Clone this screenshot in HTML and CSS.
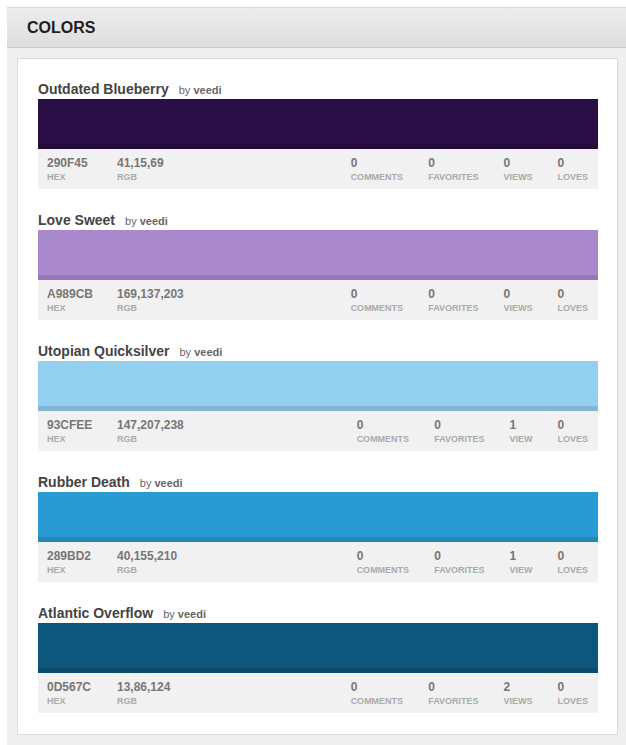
FILE: index.html
```html
<!DOCTYPE html>
<html>
<head>
<meta charset="utf-8">
<link rel="stylesheet" href="styles.css">
</head>
<body>
<div class="wrap">
  <div class="header"><h1>COLORS</h1></div>
  <div class="panel">
    <div class="item">
      <div class="title"><span class="name">Outdated Blueberry</span><span class="by">by <b>veedi</b></span></div>
      <div class="swatch" style="background:#290F45"></div>
      <div class="info">
        <div class="stat hex"><span class="val">290F45</span><span class="lbl">HEX</span></div>
        <div class="stat rgb"><span class="val">41,15,69</span><span class="lbl">RGB</span></div>
        <div class="stats">
          <div class="stat"><span class="val">0</span><span class="lbl">COMMENTS</span></div>
          <div class="stat"><span class="val">0</span><span class="lbl">FAVORITES</span></div>
          <div class="stat"><span class="val">0</span><span class="lbl">VIEWS</span></div>
          <div class="stat"><span class="val">0</span><span class="lbl">LOVES</span></div>
        </div>
      </div>
    </div>
    <div class="item">
      <div class="title"><span class="name">Love Sweet</span><span class="by">by <b>veedi</b></span></div>
      <div class="swatch" style="background:#A989CB"></div>
      <div class="info">
        <div class="stat hex"><span class="val">A989CB</span><span class="lbl">HEX</span></div>
        <div class="stat rgb"><span class="val">169,137,203</span><span class="lbl">RGB</span></div>
        <div class="stats">
          <div class="stat"><span class="val">0</span><span class="lbl">COMMENTS</span></div>
          <div class="stat"><span class="val">0</span><span class="lbl">FAVORITES</span></div>
          <div class="stat"><span class="val">0</span><span class="lbl">VIEWS</span></div>
          <div class="stat"><span class="val">0</span><span class="lbl">LOVES</span></div>
        </div>
      </div>
    </div>
    <div class="item">
      <div class="title"><span class="name">Utopian Quicksilver</span><span class="by">by <b>veedi</b></span></div>
      <div class="swatch" style="background:#93CFEE"></div>
      <div class="info">
        <div class="stat hex"><span class="val">93CFEE</span><span class="lbl">HEX</span></div>
        <div class="stat rgb"><span class="val">147,207,238</span><span class="lbl">RGB</span></div>
        <div class="stats">
          <div class="stat"><span class="val">0</span><span class="lbl">COMMENTS</span></div>
          <div class="stat"><span class="val">0</span><span class="lbl">FAVORITES</span></div>
          <div class="stat"><span class="val">1</span><span class="lbl">VIEW</span></div>
          <div class="stat"><span class="val">0</span><span class="lbl">LOVES</span></div>
        </div>
      </div>
    </div>
    <div class="item">
      <div class="title"><span class="name">Rubber Death</span><span class="by">by <b>veedi</b></span></div>
      <div class="swatch" style="background:#289BD2"></div>
      <div class="info">
        <div class="stat hex"><span class="val">289BD2</span><span class="lbl">HEX</span></div>
        <div class="stat rgb"><span class="val">40,155,210</span><span class="lbl">RGB</span></div>
        <div class="stats">
          <div class="stat"><span class="val">0</span><span class="lbl">COMMENTS</span></div>
          <div class="stat"><span class="val">0</span><span class="lbl">FAVORITES</span></div>
          <div class="stat"><span class="val">1</span><span class="lbl">VIEW</span></div>
          <div class="stat"><span class="val">0</span><span class="lbl">LOVES</span></div>
        </div>
      </div>
    </div>
    <div class="item">
      <div class="title"><span class="name">Atlantic Overflow</span><span class="by">by <b>veedi</b></span></div>
      <div class="swatch" style="background:#0D567C"></div>
      <div class="info">
        <div class="stat hex"><span class="val">0D567C</span><span class="lbl">HEX</span></div>
        <div class="stat rgb"><span class="val">13,86,124</span><span class="lbl">RGB</span></div>
        <div class="stats">
          <div class="stat"><span class="val">0</span><span class="lbl">COMMENTS</span></div>
          <div class="stat"><span class="val">0</span><span class="lbl">FAVORITES</span></div>
          <div class="stat"><span class="val">2</span><span class="lbl">VIEWS</span></div>
          <div class="stat"><span class="val">0</span><span class="lbl">LOVES</span></div>
        </div>
      </div>
    </div>
  </div>
</div>
</body>
</html>
```
FILE: styles.css
```css
html, body {
  margin: 0;
  padding: 0;
  background: #fff;
}
body {
  padding: 7px 0 0 7px;
  font-family: "Liberation Sans", Arial, sans-serif;
}
.wrap {
  background: #efefef;
  padding-bottom: 12px;
}
.header {
  height: 39px;
  border-top: 1px solid #dadada;
  border-bottom: 1px solid #c9c9c9;
  background: linear-gradient(#ececec, #e6e6e6 50%, #dddddd);
  display: flex;
  align-items: center;
  padding-left: 20px;
}
.header h1 {
  margin: 0;
  font-size: 16px;
  font-weight: bold;
  color: #1e1e1e;
}
.panel {
  margin: 10px 8px 0 10px;
  background: #fff;
  border: 1px solid #dcdcdc;
  padding: 20px 19px 21px 20px;
  display: flex;
  flex-direction: column;
  gap: 21px;
}
.title {
  height: 20px;
  display: flex;
  align-items: baseline;
  padding-top: 2px;
  box-sizing: border-box;
}
.name {
  font-size: 14px;
  font-weight: bold;
  color: #444;
}
.by {
  font-size: 11px;
  color: #666;
  margin-left: 10px;
}
.by b {
  color: #666;
}
.swatch {
  height: 50px;
  box-shadow: inset 0 -5px 0 rgba(0, 0, 0, 0.12);
}
.info {
  height: 40px;
  background: #f1f1f1;
  display: flex;
  align-items: flex-start;
  padding: 7px 10px 0 9px;
  box-sizing: border-box;
}
.stat {
  display: flex;
  flex-direction: column;
}
.hex {
  width: 70px;
}
.val {
  font-size: 12px;
  font-weight: bold;
  color: #777;
  line-height: 14px;
}
.lbl {
  font-size: 9px;
  font-weight: bold;
  color: #aaa;
  line-height: 12px;
  margin-top: 1px;
}
.stats {
  margin-left: auto;
  display: flex;
  gap: 25px;
}
```
